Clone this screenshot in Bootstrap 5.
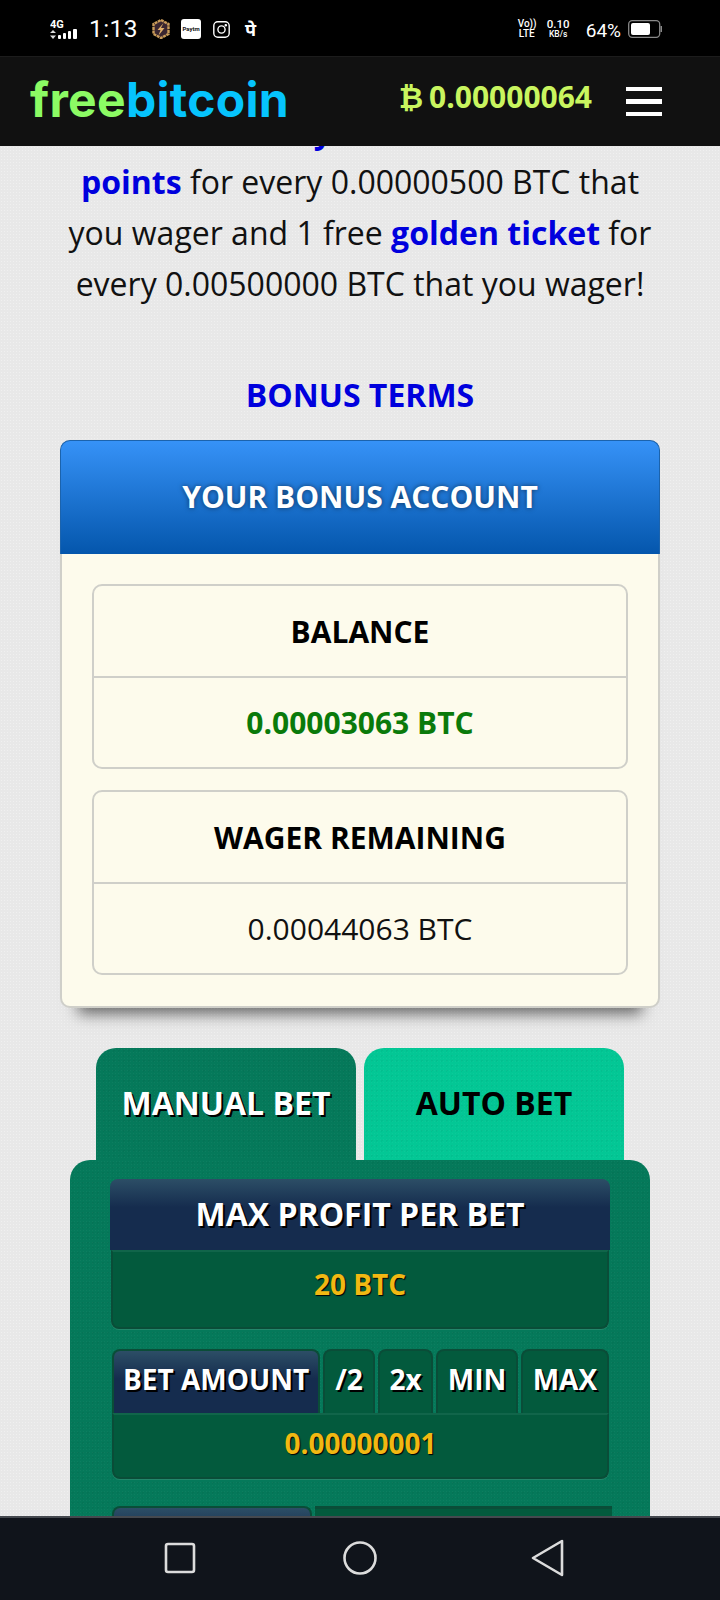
<!DOCTYPE html>
<html lang="en">
<head>
  <meta charset="UTF-8">
  <meta name="viewport" content="width=device-width, initial-scale=1.0">
  <title>Freebitcoin</title>
  <link href="https://cdn.jsdelivr.net/npm/bootstrap@5.3.0/dist/css/bootstrap.min.css" rel="stylesheet">
  <style>
    body { font-family: "Open Sans", "Noto Sans", sans-serif; background: #000; overflow: hidden; }

    /* phone status bar */
    .status-bar { height: 56px; background: #000; color: #fff; padding: 2px 58px 0 50px; font-family: Roboto, sans-serif; }
    .net-4g { width: 32px; height: 22px; margin-right: 7px; }
    .clock { font-size: 24.5px; line-height: 1; width: 63px; letter-spacing: .4px; }
    .app-hex { width: 18px; height: 20px; margin-right: 11px; }
    .app-paytm { width: 20px; height: 20px; background: #fff; color: #111; border-radius: 3px; font-size: 6px; font-weight: 700; line-height: 20px; text-align: center; margin-right: 12px; }
    .app-insta { width: 17px; height: 17px; margin-right: 15px; }
    .app-pe { font-family: "Noto Sans", "DejaVu Sans", sans-serif; font-size: 18px; font-weight: 700; line-height: 1; }
    .volte { font-size: 10px; line-height: 10px; font-weight: 500; text-align: center; width: 18px; margin-right: 10px; }
    .speed { font-size: 11.5px; line-height: 10px; font-weight: 500; text-align: center; width: 25px; margin-right: 15px; }
    .speed small { font-size: 8.5px; display: block; }
    .batt-pct { font-size: 19px; line-height: 1; margin: 3px 7px 0 0; }
    .batt { width: 34px; height: 18px; }

    /* site header */
    .site-nav { height: 90px; background: #111; padding: 0 58px 0 30px; border-top: 1px solid #1c1c1c; }
    .logo { font-family: Inter, "Open Sans", sans-serif; font-weight: 700; font-size: 48px; line-height: 1; letter-spacing: .3px; padding-bottom: 3px; }
    .logo-free { color: #8cfb64; }
    .logo-bit { color: #06c4fd; }
    .nav-balance { color: #c9f55f; font-weight: 700; font-size: 30px; line-height: 1; margin-right: 34px; padding-bottom: 8px; }
    .btc-sign { font-family: "DejaVu Sans", sans-serif; margin-right: -2px; }
    .burger { width: 36px; }
    .burger span { display: block; height: 4.5px; background: #fff; margin: 8px 0; }

    /* page area */
    .page-area {
      height: 1370px; overflow: hidden;
      background-color: #e8e8e8;
      background-image: radial-gradient(rgba(255,255,255,.35) 1px, transparent 1px);
      background-size: 3px 3px;
    }
    .page-scroll { margin-top: -41px; }
    .intro-text { font-size: 32px; line-height: 51px; color: #111; margin: 0 -10px; }
    .intro-text b, .terms-link { color: #0000dd; font-weight: 700; }
    .terms-link { font-size: 32px; line-height: 40px; text-decoration: none; display: block; text-align: center; margin-top: 66px; margin-bottom: 25px; }

    .bonus-card { margin: 0 60px 0 60px; background: #fdfbec; border: 2px solid #cfcfc9; border-radius: 10px; box-shadow: 0 24px 14px -18px rgba(0,0,0,.55); }
    .bonus-head { height: 114px; margin: -2px -2px 0; padding-bottom: 2px; background: linear-gradient(#3692f7, #0456ac); border: 1px solid #1b63ad; border-bottom: 0; border-radius: 10px 10px 0 0; color: #fff; font-size: 30px; font-weight: 700; text-shadow: 0 0 5px rgba(0,0,0,.55); }
    .bonus-body { padding: 30px 30px 31px 30px; }
    .bonus-list { border: 2px solid #cfcfc9; border-radius: 10px; margin-bottom: 21px; background: transparent; }
    .bonus-list:last-child { margin-bottom: 0; }
    .bonus-row { height: 90px; font-size: 30px; color: #111; background: transparent; }
    .bonus-row + .bonus-row { border-top: 2px solid #cfcfc9; height: 91px; }
    .bonus-title { color: #000; font-weight: 700; }
    .bonus-green { color: #0a7a0a; font-weight: 700; }

    /* bet tabs */
    .tab-row { margin: 40px 96px 0; gap: 8px; }
    .bet-tab { width: 260px; height: 112px; padding-bottom: 3px; border-radius: 20px 20px 0 0; font-size: 32px; font-weight: 700; }
    .grain { background-image: radial-gradient(rgba(255,255,255,.035) 1px, transparent 1px), radial-gradient(rgba(0,0,0,.04) 1px, transparent 1px); background-size: 3px 3px, 5px 5px; }
    .tab-on { background-color: #05795a; color: #fff; text-shadow: 2px 2px 0 #000; }
    .tab-off { background-color: #03c795; color: #000; }
    .bet-panel { margin: 0 70px; height: 400px; padding: 19px 40px 0; background-color: #05795a; border-radius: 20px 20px 0 0; }

    .profit-head { height: 71px; padding-bottom: 2px; background: linear-gradient(#2c4e66, #152c4e 40%); border-radius: 8px 8px 0 0; color: #fff; font-size: 32px; font-weight: 700; text-shadow: 2px 2px 0 #000; }
    .value-box { background: #035a3d; border: 2px solid #0a4d38; border-top-color: #11654a; color: #f1b813; font-weight: 700; text-shadow: 1px 1px 1px #000; border-radius: 0 0 8px 8px; box-shadow: 0 1px 0 #22876a; }
    .profit-value { height: 79px; font-size: 28px; margin: 0 1px; padding-bottom: 12px; }
    .bet-row { margin: 20px 1px 0 2px; gap: 3px; height: 64px; }
    .bet-label { width: 210px; padding-bottom: 6px; background: linear-gradient(#2c4e66, #152c4e 45%); border: 2px solid #0a4d38; border-bottom: 0; border-radius: 8px 8px 0 0; color: #fff; font-size: 28px; font-weight: 700; text-shadow: 2px 2px 0 #000; }
    .bet-btn { padding-bottom: 6px; background: #035a3d; border: 2px solid #0a4d38; border-bottom: 0; border-radius: 8px 8px 0 0; color: #fff; font-size: 28px; font-weight: 700; text-shadow: 2px 2px 0 #000; }
    .btn-half { width: 52px; }
    .btn-double { width: 56px; }
    .btn-min { width: 82px; }
    .btn-max { width: 89px; }
    .bet-value { height: 66px; margin: 0 1px 0 2px; font-size: 28px; padding-bottom: 6px; }
    .next-row { margin: 27px -2px 0 2px; gap: 3px; height: 30px; }
    .next-left { width: 200px; background: linear-gradient(#2c4e66, #152c4e); border: 2px solid #0a4d38; border-bottom: 0; border-radius: 8px 8px 0 0; }
    .next-right { flex: 1; background: #035a3d; border-top: 3px solid #0a4d38; }

    /* phone nav bar */
    .phone-nav { height: 84px; background: #10141b; border-top: 2px solid #45494f; }
    .phone-nav svg { display: block; }
  </style>
</head>
<body>
  <div class="d-flex flex-column vh-100">
    <!-- status bar -->
    <div class="status-bar d-flex align-items-center flex-shrink-0">
      <svg class="net-4g" viewBox="0 0 32 22">
        <text x="0" y="10" font-size="11" font-weight="700" fill="#fff" font-family="Roboto, sans-serif">4G</text>
        <path d="M3 12l3 3H0zM3 21l3-3.500H0z" fill="#ddd"/>
        <rect x="8" y="17" width="3" height="4" rx="1" fill="#fff"/>
        <rect x="13" y="15" width="3" height="6" rx="1" fill="#fff"/>
        <rect x="18" y="13" width="3" height="8" rx="1" fill="#fff"/>
        <rect x="23" y="11" width="4" height="10" rx="1" fill="#fff"/>
      </svg>
      <div class="clock">1:13</div>
      <svg class="app-hex" viewBox="0 0 18 20">
        <path d="M9 1l7.500 4v10L9 19l-7.500-4V5z" fill="#3a2630" stroke="#c99c5a" stroke-width="2.400" stroke-dasharray="3 .6"/>
        <path d="M11.500 4L5.500 11h3l-2 5.500 6-7.500H9z" fill="#e0b06a"/>
      </svg>
      <div class="app-paytm">Paytm</div>
      <svg class="app-insta" viewBox="0 0 17 17" fill="none" stroke="#fff" stroke-width="1.400">
        <rect x=".8" y=".8" width="15.400" height="15.400" rx="4"/>
        <circle cx="8.500" cy="8.500" r="3.600"/>
        <circle cx="12.800" cy="4.200" r=".6" fill="#fff"/>
      </svg>
      <div class="app-pe">पे</div>
      <div class="ms-auto d-flex align-items-center">
        <div class="volte">Vo))<br>LTE</div>
        <div class="speed">0.10<small>KB/s</small></div>
        <div class="batt-pct">64%</div>
        <svg class="batt" viewBox="0 0 34 18">
          <rect x=".7" y=".7" width="31" height="16.600" rx="3.500" fill="none" stroke="#888" stroke-width="1.300"/>
          <rect x="3" y="3" width="19" height="12" rx="2" fill="#fff"/>
          <rect x="32.500" y="6" width="1.500" height="6" fill="#888"/>
        </svg>
      </div>
    </div>

    <!-- site header -->
    <nav class="navbar site-nav flex-nowrap flex-shrink-0">
      <div class="logo"><span class="logo-free">free</span><span class="logo-bit">bitcoin</span></div>
      <div class="d-flex align-items-center ms-auto">
        <div class="nav-balance"><span class="btc-sign">₿</span> 0.00000064</div>
        <div class="burger"><span></span><span></span><span></span></div>
      </div>
    </nav>

    <!-- page -->
    <div class="page-area">
      <div class="page-scroll">
        <p class="intro-text text-center">
          You <b>may</b> also earn 10<br>
          <b>points</b> for every 0.00000500 BTC that<br>
          you wager and 1 free <b>golden ticket</b> for<br>
          every 0.00500000 BTC that you wager!
        </p>
        <a class="terms-link" href="#">BONUS TERMS</a>

        <div class="bonus-card">
          <div class="bonus-head d-flex align-items-center justify-content-center">YOUR BONUS ACCOUNT</div>
          <div class="bonus-body">
            <div class="bonus-list">
              <div class="bonus-row bonus-title d-flex align-items-center justify-content-center">BALANCE</div>
              <div class="bonus-row bonus-green d-flex align-items-center justify-content-center">0.00003063 BTC</div>
            </div>
            <div class="bonus-list">
              <div class="bonus-row bonus-title d-flex align-items-center justify-content-center">WAGER REMAINING</div>
              <div class="bonus-row d-flex align-items-center justify-content-center">0.00044063 BTC</div>
            </div>
          </div>
        </div>

        <div class="tab-row d-flex">
          <div class="bet-tab tab-on grain d-flex align-items-center justify-content-center">MANUAL BET</div>
          <div class="bet-tab tab-off grain d-flex align-items-center justify-content-center">AUTO BET</div>
        </div>
        <div class="bet-panel grain">
          <div class="profit-head d-flex align-items-center justify-content-center">MAX PROFIT PER BET</div>
          <div class="value-box profit-value d-flex align-items-center justify-content-center">20 BTC</div>

          <div class="bet-row d-flex">
            <div class="bet-label d-flex align-items-center justify-content-center">BET AMOUNT</div>
            <div class="bet-btn btn-half d-flex align-items-center justify-content-center">/2</div>
            <div class="bet-btn btn-double d-flex align-items-center justify-content-center">2x</div>
            <div class="bet-btn btn-min d-flex align-items-center justify-content-center">MIN</div>
            <div class="bet-btn btn-max d-flex align-items-center justify-content-center">MAX</div>
          </div>
          <div class="value-box bet-value d-flex align-items-center justify-content-center">0.00000001</div>

          <div class="next-row d-flex">
            <div class="next-left"></div>
            <div class="next-right"></div>
          </div>
        </div>
      </div>
    </div>

    <!-- phone nav bar -->
    <div class="phone-nav flex-shrink-0">
      <svg width="720" height="82" viewBox="0 0 720 82" fill="none" stroke="#dcdcdc" stroke-width="2.600" stroke-linejoin="round">
        <rect x="166" y="26" width="28" height="28" rx="2"/>
        <circle cx="360" cy="40" r="15.500"/>
        <path d="M562 23v34L533 40z"/>
      </svg>
    </div>
  </div>

  <script src="https://cdn.jsdelivr.net/npm/bootstrap@5.3.0/dist/js/bootstrap.bundle.min.js"></script>
</body>
</html>
